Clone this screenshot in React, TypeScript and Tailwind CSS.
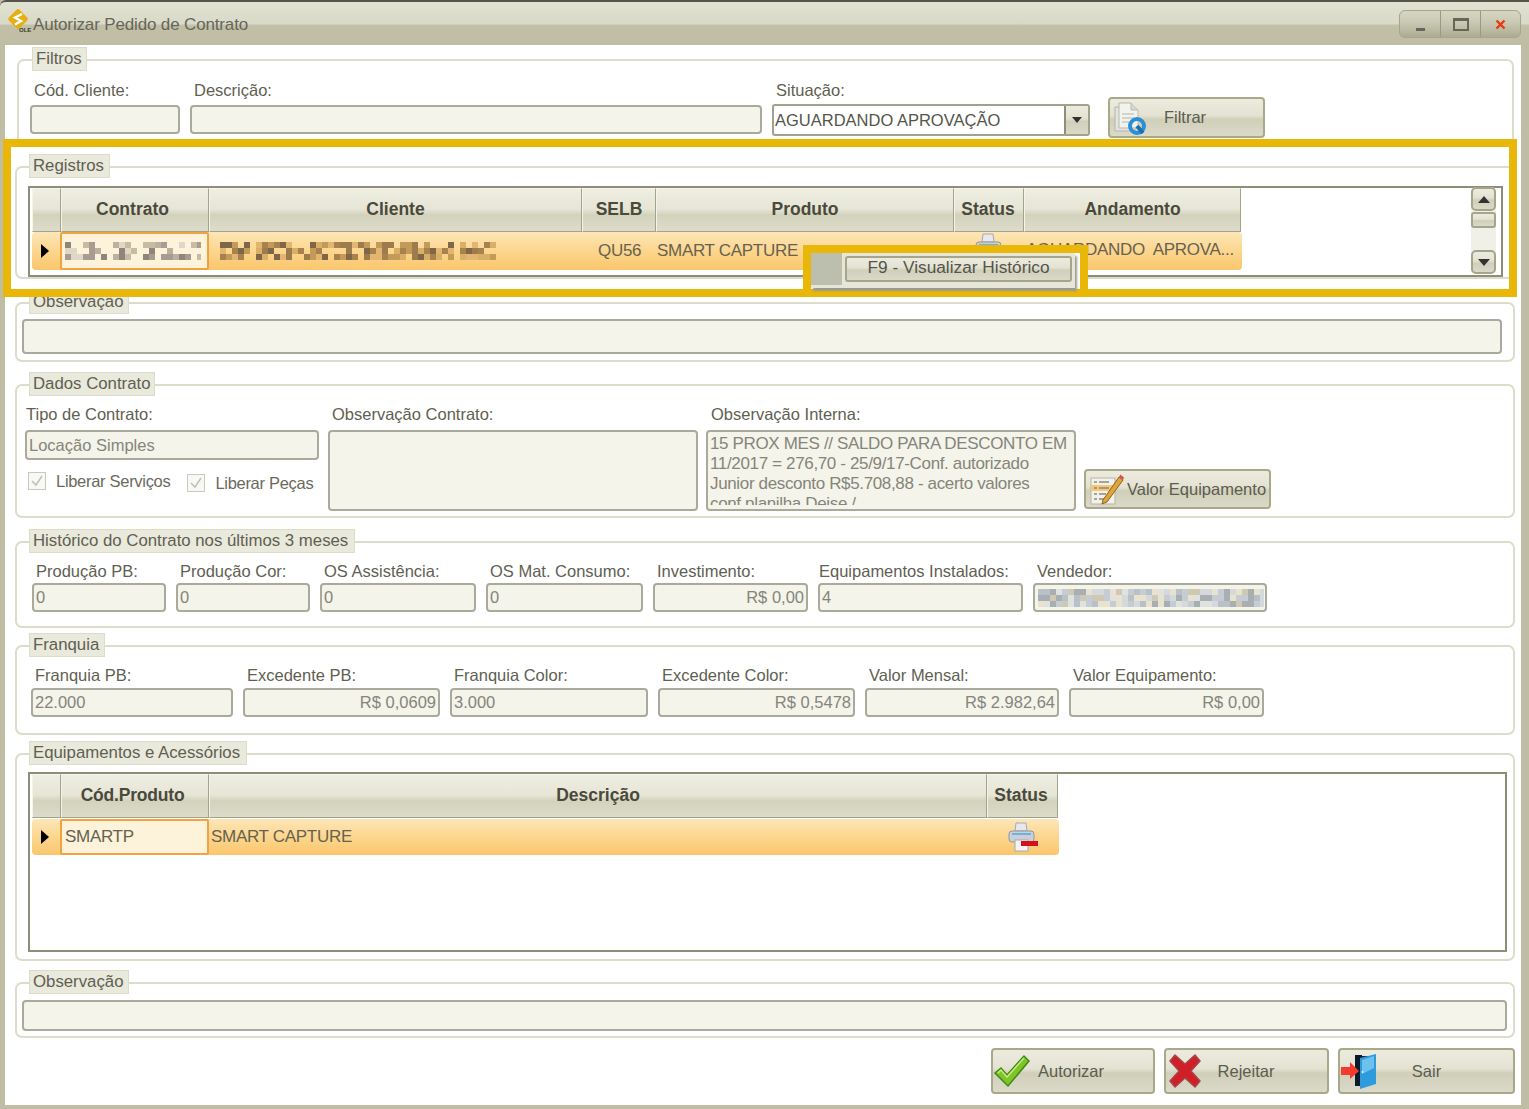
import type { ReactNode } from "react";

const rowBg = "bg-[linear-gradient(#fde6b8,#fcd68e_50%,#fac66c)]";
const headBg = "bg-[linear-gradient(#eeeee2,#e6e5d6_48%,#d3d2bc_62%,#dddccb)]";
const btnBg = "bg-[linear-gradient(#ecebdf,#e3e2d2_45%,#d0cfb9_55%,#dbdaca)]";

// fake pixelated text, same picture on every render
const Mosaic = ({ w, colors, seed }: { w: number; colors: string[]; seed: number }) => {
  const cells = [];
  let s = seed;
  for (let x = 0; x < w; x += 6) {
    for (let y = 0; y < 18; y += 6) {
      s = (Math.imul(s, 1103515245) + 12345) & 0x7fffffff;
      const c = colors[(s >> 16) % colors.length];
      if (c) cells.push(<rect key={x + "-" + y} x={x} y={y} width="6" height="6" fill={c} />);
    }
  }
  return (
    <svg width={w} height="18" className="blur-[0.6px] shrink-0">
      {cells}
    </svg>
  );
};

const Logo = () => (
  <svg width="26" height="26" viewBox="0 0 26 26" className="shrink-0">
    <rect x="3.5" y="3.5" width="15" height="15" rx="2" transform="rotate(45 11 11)" fill="#e6ae12" />
    <path d="M15 6 L8 9.5 L14 13 L8 16.5" fill="none" stroke="#fff" strokeWidth="2.4" />
    <text x="12" y="24" fontSize="6" fontWeight="700" fill="#3a3a20" fontFamily="Liberation Sans">OLE</text>
  </svg>
);

const FilterIcon = () => (
  <svg width="34" height="36" viewBox="0 0 34 36">
    <path d="M2 7 H16 L22 13 V31 H2 Z" fill="#e4e4de" stroke="#b5b5ad" />
    <path d="M6 3 H18 L25 10 V28 H6 Z" fill="#f3f3ee" stroke="#b9b9b0" />
    <path d="M18 3 V10 H25" fill="#d8d8d2" stroke="#b9b9b0" />
    <path d="M9 14 H21 M9 18 H21 M9 22 H16" stroke="#c9c9c2" strokeWidth="1.5" />
    <circle cx="24" cy="26" r="7" fill="none" stroke="#2b8fd6" strokeWidth="4" />
    <path d="M24 26 L30 33" stroke="#1a70b8" strokeWidth="4" />
  </svg>
);

const PencilIcon = () => (
  <svg width="36" height="36" viewBox="0 0 36 36">
    <rect x="3" y="7" width="24" height="26" fill="#f2f2ea" stroke="#b5b5a5" />
    <rect x="3" y="14" width="24" height="6" fill="#f7c777" />
    <path d="M6 11 H9 M11 11 H21 M6 17 H9 M11 17 H21 M6 23 H9 M11 23 H18 M6 28 H9 M11 28 H16" stroke="#8a8a80" strokeWidth="1.6" />
    <path d="M15 29 L31 6 L35 9 L19 31 L14 33 Z" fill="#e2a33a" stroke="#8a6420" />
    <path d="M31 6 L32.5 3.5 L36 6.5 L35 9 Z" fill="#d9534f" />
  </svg>
);

const CheckIcon = () => (
  <svg width="38" height="34" viewBox="0 0 38 34">
    <path d="M2 19 L8 14 L14 21 L31 2 L36 7 L15 32 Z" fill="#7fc52a" stroke="#3f8a12" strokeWidth="1.5" />
    <path d="M5 19 L8 16 L14 23 L31 4" fill="none" stroke="#c6ea7c" strokeWidth="1.5" />
  </svg>
);

const RejectIcon = () => (
  <svg width="36" height="36" viewBox="0 0 36 36">
    <path d="M3 8 L8 2 L18 11 L28 2 L33 8 L24 18 L33 28 L28 34 L18 25 L8 34 L3 28 L12 18 Z" fill="#d01f26" stroke="#a5464c" strokeWidth="1.5" strokeLinejoin="round" />
  </svg>
);

const DoorIcon = () => (
  <svg width="40" height="38" viewBox="0 0 40 38">
    <path d="M16 4 H35 V5 L17 8 Z" fill="#0c2b4a" />
    <path d="M15 3 H22 V34 H15 Z" fill="#0a1a2c" />
    <path d="M20 6 L36 2 V32 L20 37 Z" fill="#2d9bdc" />
    <path d="M22 8 L34 4 V16 L22 22 Z" fill="#6cc1ee" />
    <circle cx="22.5" cy="20" r="1" fill="#eef" />
    <path d="M1 15 H10 V10 L19 19 L10 27 V23 H1 Z" fill="#f23a2f" />
  </svg>
);

const PrinterIcon = () => (
  <svg width="32" height="32" viewBox="0 0 32 32">
    <path d="M9 2 H19 L20 10 H8 Z" fill="#e6e8ee" stroke="#a7a9b0" />
    <rect x="2" y="10" width="25" height="11" rx="3" fill="#c9d0d9" stroke="#8f969f" />
    <rect x="5" y="12" width="19" height="2" fill="#6fb0df" />
    <rect x="8" y="19" width="13" height="11" fill="#f4f4f4" stroke="#a7a9b0" />
    <rect x="14" y="20" width="17" height="5" fill="#d4101d" />
  </svg>
);

const Label = ({ children, cls = "h-[24px] pl-[4px]" }: { children: ReactNode; cls?: string }) => (
  <div className={`${cls} leading-[18px] whitespace-nowrap`}>{children}</div>
);

const Input = ({ size, value, right }: { size: string; value?: string; right?: boolean }) => (
  <div
    className={`${size} flex items-center border-2 border-[#a9a99c] rounded-[4px] bg-[#f4f4ea] text-[#85857a] pl-[2px] pr-[2px] overflow-hidden whitespace-nowrap ${right ? "justify-end" : ""}`}
  >
    {value}
  </div>
);

const Field = ({ label, size, value, right, lc }: { label: string; size: string; value?: string; right?: boolean; lc?: string }) => (
  <div className="shrink-0">
    <Label cls={lc}>{label}</Label>
    <Input size={size} value={value} right={right} />
  </div>
);

const Group = ({ title, cls, lc, children }: { title: string; cls: string; lc: string; children: ReactNode }) => (
  <section className={`${cls} shrink-0 border-2 border-[#dcdccb] rounded-[7px]`}>
    <div className={`${lc} -mt-[14px] h-[24px] bg-[#e9e9dc] border border-[#dddcca] pl-[3px] text-[16.8px] leading-[21px] whitespace-nowrap`}>
      {title}
    </div>
    {children}
  </section>
);

const Head = ({ w, children }: { w: string; children?: ReactNode }) => (
  <div
    className={`${headBg} ${w} shrink-0 h-[44px] pb-[2px] border border-[#a3a38d] border-l-[#f4f4ec] border-t-[#f4f4ec] font-bold text-[#4a4a3c] text-[17.5px] flex items-center justify-center`}
  >
    {children}
  </div>
);

const Arrow = () => (
  <div className="w-0 h-0 border-y-[7px] border-y-transparent border-l-[8px] border-l-black ml-[9px]" />
);

const Button = ({ cls, icon, children, tc = "" }: { cls: string; icon: ReactNode; children: ReactNode; tc?: string }) => (
  <button className={`${btnBg} ${cls} shrink-0 border-2 border-[#a9a98a] rounded-[4px] flex items-center text-[#5c5c50]`}>
    <span className="flex shrink-0">{icon}</span>
    <span className={`${tc} flex-1 text-center whitespace-nowrap`}>{children}</span>
  </button>
);

const Check = ({ label }: { label: string }) => (
  <div className="flex items-center gap-[10px] whitespace-nowrap text-[#6a6a5c] tracking-[-0.3px]">
    <svg width="18" height="18" viewBox="0 0 18 18">
      <rect x="0.5" y="0.5" width="17" height="17" fill="#f8f8f4" stroke="#c9c9c0" />
      <path d="M4 9 L8 13 L14 4" fill="none" stroke="#c0c0b8" strokeWidth="1.5" />
    </svg>
    {label}
  </div>
);

const ScrollBtn = ({ up }: { up?: boolean }) => (
  <div className={`${btnBg} h-[24px] border-2 border-[#a5a58c] rounded-[5px] flex items-center justify-center`}>
    <div className={`w-0 h-0 border-x-[6px] border-x-transparent ${up ? "border-b-[7px] border-b-[#333]" : "border-t-[7px] border-t-[#333]"}`} />
  </div>
);

const App = () => {
  return (
    <div
      className="relative w-[1529px] h-[1109px] flex flex-col bg-[#bfbea5] text-[#5f5f52] text-[16.5px] overflow-hidden"
      style={{ fontFamily: '"Liberation Sans", Arial, sans-serif' }}
    >
      <header className="h-[45px] shrink-0 border-t-2 border-[#55554a] rounded-tl-[6px] bg-[linear-gradient(#e2e2d4,#d9d9c8_50%,#c1c0a7_55%,#bfbea5)] flex items-start pl-[7px] pt-[6px]">
        <Logo />
        <span className="mt-[4px] text-[17px] text-[#66665a] tracking-[-0.15px]">Autorizar Pedido de Contrato</span>
        <div className="ml-auto mr-[8px] mt-[2px] w-[122px] h-[28px] flex border border-[#a6a68f] rounded-[6px] bg-[linear-gradient(#d6d6c4,#c9c8b2_45%,#acab92)] overflow-hidden">
          <div className="w-[41px] border-r border-[#9a9a82] flex items-end justify-center pb-[6px]">
            <div className="w-[9px] h-[3px] bg-[#66665a]" />
          </div>
          <div className="w-[40px] border-r border-[#9a9a82] flex items-center justify-center">
            <div className="w-[16px] h-[13px] border-2 border-t-[3px] border-[#66665a]" />
          </div>
          <div className="flex-1 flex items-center justify-center">
            <svg width="11" height="11" viewBox="0 0 11 11">
              <path d="M1.5 1.5 L9.5 9.5 M9.5 1.5 L1.5 9.5" stroke="#e53a12" strokeWidth="2.4" />
            </svg>
          </div>
        </div>
      </header>

      <main className="flex-1 ml-[5px] mr-[8px] mb-[4px] bg-white flex flex-col min-h-0">
        <Group title="Filtros" cls="mt-[14px] ml-[12px] w-[1497px] h-[86px]" lc="ml-[13px] w-[55px]">
          <div className="flex gap-[10px] mt-[10px] ml-[11px] items-start">
            <Field label="Cód. Cliente:" size="w-[150px] h-[29px]" />
            <Field label="Descrição:" size="w-[572px] h-[29px]" />
            <div className="shrink-0">
              <Label>Situação:</Label>
              <div className="w-[318px] h-[32px] -mt-px bg-white border-2 border-[#a2a28c] rounded-[3px] flex items-center pl-px text-[#55554a]">
                <span className="flex-1">AGUARDANDO APROVAÇÃO</span>
                <div className={`${btnBg} w-[24px] h-full border-l-2 border-[#8f8f78] flex items-center justify-center`}>
                  <div className="w-0 h-0 border-x-[5px] border-x-transparent border-t-[6px] border-t-[#333]" />
                </div>
              </div>
            </div>
            <div className="ml-[8px] mt-[16px]">
              <Button cls="w-[157px] h-[41px]" icon={<span className="ml-[3px] flex"><FilterIcon /></span>} tc="pr-[40px]">
                Filtrar
              </Button>
            </div>
          </div>
        </Group>

        <Group title="Registros" cls="mt-[21px] ml-[10px] w-[1500px] h-[113px]" lc="ml-[12px] w-[81px]">
          <div className="mt-[8px] ml-[11px] w-[1475px] h-[91px] border-2 border-[#8e8e78] bg-white flex pl-[2px]">
            <div className="w-[1210px]">
              <div className="flex">
                <Head w="w-[29px]" />
                <Head w="w-[148px]"><span className="pr-[5px]">Contrato</span></Head>
                <Head w="w-[373px]">Cliente</Head>
                <Head w="w-[74px]">SELB</Head>
                <Head w="w-[298px]">Produto</Head>
                <Head w="w-[70px]"><span className="pr-[2px]">Status</span></Head>
                <Head w="w-[217px]">Andamento</Head>
              </div>
              <div className={`${rowBg} h-[38px] w-[1210px] rounded-[4px] flex items-center text-[#66624f] text-[17px] tracking-[-0.3px]`}>
                <div className="w-[28px] shrink-0"><Arrow /></div>
                <div className="w-[149px] h-full shrink-0 bg-[#fdf2da] border-2 border-[#f2a33e] rounded-[2px] flex items-center pl-[3px] overflow-hidden">
                  <Mosaic w={136} seed={41} colors={["#dfd8c8", "#8f8578", "#c8bba2", "", "", "#a99a92", "", "#bcb0a0", ""]} />
                </div>
                <div className="w-[373px] h-full shrink-0 flex items-center pl-[5px]">
                  <Mosaic w={282} seed={7} colors={["#9c7b4c", "#c39a58", "#7d6748", "#e3b570", "", "#a8824e", "", "#d9ae66"]} />
                </div>
                <div className="w-[74px] shrink-0 pl-[16px]">QU56</div>
                <div className="w-[298px] shrink-0 pl-[1px]">SMART CAPTURE</div>
                <div className="w-[70px] h-full shrink-0 flex justify-center pl-[1px] overflow-hidden"><PrinterIcon /></div>
                <div className="w-[217px] shrink-0 pl-[2px] pb-[3px] whitespace-pre overflow-hidden">AGUARDANDO  APROVA...</div>
              </div>
            </div>
            <div className="ml-auto mr-[5px] -mt-px w-[25px] flex flex-col bg-[#f0f0e6] h-[87px] rounded-[5px]">
              <ScrollBtn up />
              <div className={`${btnBg} mt-[1px] h-[16px] border-2 border-[#a5a58c] rounded-[3px]`} />
              <div className="flex-1" />
              <ScrollBtn />
            </div>
          </div>
        </Group>

        <Group title="Observação" cls="mt-[23px] ml-[10px] w-[1500px] h-[60px]" lc="ml-[12px] w-[100px]">
          <div className="mt-[5px] ml-[5px]">
            <Input size="w-[1480px] h-[35px]" />
          </div>
        </Group>

        <Group title="Dados Contrato" cls="mt-[22px] ml-[10px] w-[1500px] h-[134px]" lc="ml-[12px] w-[126px]">
          <div className="mt-[9px] ml-[8px] flex items-start">
            <div className="w-[303px] shrink-0">
              <Label cls="h-[25px] pl-[1px]">Tipo de Contrato:</Label>
              <Input size="w-[294px] h-[30px]" value="Locação Simples" />
              <div className="flex mt-[9px] ml-[3px] gap-[17px] items-start">
                <Check label="Liberar Serviços" />
                <div className="mt-[2px]"><Check label="Liberar Peças" /></div>
              </div>
            </div>
            <div className="w-[378px] shrink-0">
              <Label cls="h-[25px] pl-[4px]">Observação Contrato:</Label>
              <Input size="w-[370px] h-[81px]" />
            </div>
            <div className="w-[378px] shrink-0">
              <Label cls="h-[25px] pl-[5px]">Observação Interna:</Label>
              <div className="w-[370px] h-[81px] border-2 border-[#a9a99c] rounded-[4px] bg-[#f4f4ea] text-[#85857a] pl-[2px] text-[17px] tracking-[-0.35px] whitespace-nowrap">
                <div className="h-[73px] pt-[2px] leading-[20px] overflow-hidden">
                  <div>15 PROX MES // SALDO PARA DESCONTO EM</div>
                  <div>11/2017 = 276,70 - 25/9/17-Conf. autorizado</div>
                  <div>Junior desconto R$5.708,88 - acerto valores</div>
                  <div>conf planilha Deise /</div>
                </div>
              </div>
            </div>
            <div className="mt-[64px]">
              <Button cls="w-[187px] h-[40px]" icon={<span className="ml-[2px] flex"><PencilIcon /></span>}>
                Valor Equipamento
              </Button>
            </div>
          </div>
        </Group>

        <Group title="Histórico do Contrato nos últimos 3 meses" cls="mt-[23px] ml-[10px] w-[1500px] h-[87px]" lc="ml-[12px] w-[326px]">
          <div className="mt-[9px] ml-[15px] flex gap-[10px]">
            <Field lc="h-[21px] pl-[4px]" label="Produção PB:" size="w-[134px] h-[29px]" value="0" />
            <Field lc="h-[21px] pl-[4px]" label="Produção Cor:" size="w-[134px] h-[29px]" value="0" />
            <Field lc="h-[21px] pl-[4px]" label="OS Assistência:" size="w-[156px] h-[29px]" value="0" />
            <Field lc="h-[21px] pl-[4px]" label="OS Mat. Consumo:" size="w-[157px] h-[29px]" value="0" />
            <Field lc="h-[21px] pl-[4px]" label="Investimento:" size="w-[155px] h-[29px]" value="R$ 0,00" right />
            <Field lc="h-[21px] pl-[1px]" label="Equipamentos Instalados:" size="w-[205px] h-[29px]" value="4" />
            <div className="shrink-0">
              <Label cls="h-[21px] pl-[4px]">Vendedor:</Label>
              <div className="w-[234px] h-[29px] border-2 border-[#a9a99c] rounded-[4px] bg-[#f4f4ea] flex items-center pl-[3px] overflow-hidden">
                <Mosaic w={226} seed={93} colors={["#d6d9dc", "#b8c0c8", "#e8e2cf", "#c6ccd4", "#a9aeb2", "#dfe3e0", "#cfc8b4"]} />
              </div>
            </div>
          </div>
        </Group>

        <Group title="Franquia" cls="mt-[17px] ml-[10px] w-[1500px] h-[90px]" lc="ml-[12px] w-[76px]">
          <div className="mt-[9px] ml-[14px] flex gap-[10px]">
            <Field lc="h-[22px] pl-[4px]" label="Franquia PB:" size="w-[202px] h-[29px]" value="22.000" />
            <Field lc="h-[22px] pl-[4px]" label="Excedente PB:" size="w-[197px] h-[29px]" value="R$ 0,0609" right />
            <Field lc="h-[22px] pl-[4px]" label="Franquia Color:" size="w-[198px] h-[29px]" value="3.000" />
            <Field lc="h-[22px] pl-[4px]" label="Excedente Color:" size="w-[197px] h-[29px]" value="R$ 0,5478" right />
            <Field lc="h-[22px] pl-[4px]" label="Valor Mensal:" size="w-[194px] h-[29px]" value="R$ 2.982,64" right />
            <Field lc="h-[22px] pl-[4px]" label="Valor Equipamento:" size="w-[195px] h-[29px]" value="R$ 0,00" right />
          </div>
        </Group>

        <Group title="Equipamentos e Acessórios" cls="mt-[18px] ml-[10px] w-[1500px] h-[208px]" lc="ml-[12px] w-[218px]">
          <div className="mt-[7px] ml-[11px] w-[1479px] h-[180px] border-2 border-[#8e8e78] bg-white pl-[2px]">
            <div className="flex">
              <Head w="w-[29px]" />
              <Head w="w-[148px]"><span className="pr-[5px] tracking-[-0.2px]">Cód.Produto</span></Head>
              <Head w="w-[778px]">Descrição</Head>
              <Head w="w-[71px]"><span className="pr-[3px]">Status</span></Head>
            </div>
            <div className={`${rowBg} mt-px h-[36px] w-[1027px] rounded-[4px] flex items-center text-[#66624f] text-[17px] tracking-[-0.3px]`}>
              <div className="w-[28px] shrink-0"><Arrow /></div>
              <div className="w-[149px] h-full shrink-0 bg-[#fdf2da] border-2 border-[#f2a33e] rounded-[2px] flex items-center pl-[3px]">SMARTP</div>
              <div className="w-[778px] shrink-0 pl-[2px]">SMART CAPTURE</div>
              <div className="w-[71px] shrink-0 flex justify-center"><PrinterIcon /></div>
            </div>
          </div>
        </Group>

        <Group title="Observação" cls="mt-[21px] ml-[10px] w-[1500px] h-[56px]" lc="ml-[12px] w-[100px]">
          <div className="mt-[6px] ml-[5px]">
            <Input size="w-[1485px] h-[31px]" />
          </div>
        </Group>

        <div className="mt-[10px] mr-[6px] flex justify-end gap-[9px]">
          <Button cls="w-[164px] h-[46px]" icon={<CheckIcon />} tc="pr-[42px]">Autorizar</Button>
          <Button cls="w-[165px] h-[46px]" icon={<span className="ml-[1px] flex"><RejectIcon /></span>} tc="pr-[38px]">Rejeitar</Button>
          <Button cls="w-[177px] h-[46px]" icon={<DoorIcon />} tc="pr-[40px]">Sair</Button>
        </div>
      </main>

      {/* marcação amarela por cima da tela */}
      <div className="absolute left-[3px] top-[139px] w-[1514px] h-[158px] border-8 border-[#e8b708] pointer-events-none" />
      <div className="absolute left-[803px] top-[245px] w-[285px] h-[52px] border-8 border-[#e8b708] bg-white">
        <div className="w-[264px] h-[35px] bg-[#e6e6d9] flex items-start pt-[3px] shadow-[2px_3px_2px_#9a9a90]">
          <div className="w-[31px] h-[32px] -mt-[3px] bg-[#bdbfae] shrink-0" />
          <div className={`${btnBg} ml-[3px] w-[227px] h-[26px] border-2 border-[#a5a58c] rounded-[3px] text-center leading-[18px] text-[17.3px] text-[#55554a] whitespace-nowrap`}>
            F9 - Visualizar Histórico
          </div>
        </div>
      </div>
    </div>
  );
};

export default App;
